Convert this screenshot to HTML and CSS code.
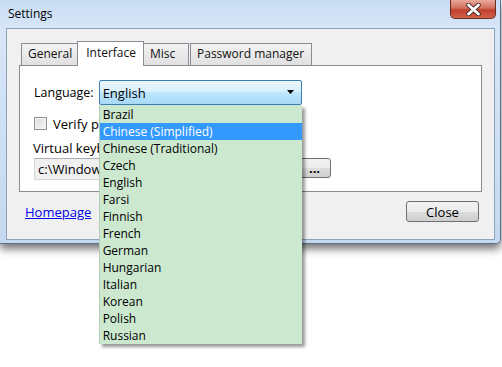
FILE: index.html
```
<!DOCTYPE html>
<html lang="en">
<head>
    <meta charset="UTF-8">
    <title>Settings</title>
    <link rel="stylesheet" href="styles.css">
</head>
<body>
    <div class="window">
        <div class="titlebar">
            <span class="title">Settings</span>
            <div class="close-x">
                <svg width="15" height="13" viewBox="0 0 15 13">
                    <path d="M2.5 2 L12.5 11 M12.5 2 L2.5 11" stroke="#4a2a24" stroke-width="4.6" stroke-linecap="round"/>
                    <path d="M2.5 2 L12.5 11 M12.5 2 L2.5 11" stroke="#fff" stroke-width="2.8" stroke-linecap="round"/>
                </svg>
            </div>
        </div>
        <div class="client">
            <div class="tabs">
                <div class="tab general">General</div>
                <div class="tab active">Interface</div>
                <div class="tab misc">Misc</div>
                <div class="tab">Password manager</div>
            </div>
            <div class="panel">
                <div class="row">
                    <label>Language:</label>
                    <div class="combo-wrap">
                        <div class="combo">
                            <span>English</span>
                            <svg width="8" height="5" viewBox="0 0 8 5"><path d="M0 0 H7 L3.5 4 Z" fill="#000"/></svg>
                        </div>
                        <ul class="dropdown">
                            <li>Brazil</li>
                            <li class="selected">Chinese (Simplified)</li>
                            <li>Chinese (Traditional)</li>
                            <li>Czech</li>
                            <li>English</li>
                            <li>Farsi</li>
                            <li>Finnish</li>
                            <li>French</li>
                            <li>German</li>
                            <li>Hungarian</li>
                            <li>Italian</li>
                            <li>Korean</li>
                            <li>Polish</li>
                            <li>Russian</li>
                        </ul>
                    </div>
                </div>
                <div class="check-row">
                    <span class="checkbox"></span>
                    <span>Verify p</span>
                </div>
                <div class="vk-label">Virtual keyb</div>
                <div class="vk-row">
                    <div class="field">c:\Window</div>
                    <button class="btn small">...</button>
                </div>
            </div>
            <div class="footer">
                <a href="#" class="link">Homepage</a>
                <button class="btn close">Close</button>
            </div>
        </div>
    </div>
</body>
</html>
```

FILE: styles.css
```
html, body {
    min-height: 367px;
}

body {
    margin: 0;
    background-color: #fff;
    font-family: "Open Sans", "Liberation Sans", sans-serif;
    font-size: 12.5px;
    color: #000;
}

.window {
    width: 501px;
    height: 244px;
    box-sizing: border-box;
    background: linear-gradient(#c8dcf3, #d7e6f7 30px, #c4d9ef);
    border-right: 1px solid #5b6f86;
    border-bottom: 1px solid #5b6f86;
    border-bottom-right-radius: 5px;
    box-shadow: 0 5px 9px rgba(0, 0, 0, 0.55);
}

.titlebar {
    height: 28px;
    display: flex;
    justify-content: space-between;
    align-items: flex-start;
}

.title {
    padding-left: 8px;
    line-height: 28px;
    font-size: 12px;
}

.close-x {
    width: 46px;
    height: 19px;
    margin-right: 4px;
    box-sizing: border-box;
    border: 1px solid #6b2c22;
    border-top: none;
    border-radius: 0 0 5px 5px;
    background: linear-gradient(#e9a89a, #d1705e 45%, #c0402c 55%, #d2614c);
    display: flex;
    align-items: center;
    justify-content: center;
}

.client {
    margin: 0 5px 0 6px;
    height: 212px;
    box-sizing: border-box;
    background-color: #f0f0f0;
    border: 1px solid #8ca3bb;
    padding: 11px 12px 0 12px;
}

.tabs {
    display: flex;
    align-items: flex-end;
    height: 25px;
    padding-left: 2px;
    font-size: 12px;
}

.tab {
    height: 22px;
    box-sizing: border-box;
    padding: 0 6px 0 6px;
    line-height: 20px;
    border: 1px solid #898c95;
    border-bottom: none;
    background: linear-gradient(#f3f3f3, #e0e0e0);
    color: #111;
}

.tab.general {
    padding-right: 5px;
}

.tab.active {
    height: 25px;
    margin: 0 -1px -1px -1px;
    padding: 0 7px 0 8px;
    line-height: 22px;
    background: #fff;
    position: relative;
    z-index: 1;
}

.tab.misc {
    width: 46px;
}

.tab:last-child {
    margin-left: 1px;
    padding: 0 7px 0 6px;
}

.panel {
    height: 127px;
    box-sizing: border-box;
    background-color: #fff;
    border: 1px solid #898c95;
    padding: 14px 0 0 14px;
}

.row {
    display: flex;
    align-items: center;
    gap: 5px;
}

.combo-wrap {
    position: relative;
}

.combo {
    width: 203px;
    height: 25px;
    box-sizing: border-box;
    border: 1px solid #3c7fb1;
    border-radius: 2px;
    background: linear-gradient(#eaf6fd, #d9f0fc 45%, #bee6fd 50%, #a7d9f5);
    display: flex;
    align-items: center;
    justify-content: space-between;
    padding: 0 6px 0 3px;
    font-size: 13px;
}

.dropdown {
    position: absolute;
    top: 25px;
    left: 0;
    width: 203px;
    margin: 0;
    padding: 1px 0 0 0;
    list-style: none;
    box-sizing: border-box;
    background-color: #cce8cf;
    border-left: 1px solid #b6cdb8;
    box-shadow: 3px 3px 3px rgba(0, 0, 0, 0.4);
    z-index: 5;
}

.dropdown li {
    height: 17px;
    line-height: 17px;
    padding-left: 3px;
    font-size: 12px;
}

.dropdown li.selected {
    background-color: #3399ff;
    color: #fff;
}

.check-row {
    display: flex;
    align-items: center;
    gap: 6px;
    margin-top: 12px;
    height: 13px;
    font-size: 13px;
}

.checkbox {
    width: 13px;
    height: 13px;
    box-sizing: border-box;
    border: 1px solid #8f8f8f;
    background: linear-gradient(135deg, #dcdcdc, #f6f6f6);
    box-shadow: inset 0 0 0 1px #f4f4f4;
}

.vk-label {
    margin-top: 10px;
    margin-left: -1px;
    line-height: 17px;
    font-size: 13px;
}

.vk-row {
    display: flex;
    align-items: flex-start;
    gap: 2px;
    margin-top: 1px;
}

.field {
    width: 262px;
    height: 22px;
    box-sizing: border-box;
    border: 1px solid #d5d5d5;
    border-top-color: #abadb3;
    background-color: #f0f0f0;
    line-height: 20px;
    padding-left: 3px;
    font-size: 13px;
}

.btn {
    font-family: inherit;
    font-size: 13px;
    box-sizing: border-box;
    border: 1px solid #707070;
    border-radius: 3px;
    background: linear-gradient(#f2f2f2, #ebebeb 50%, #dddddd 50%, #cfcfcf);
    padding: 0;
    color: #000;
}

.btn.small {
    width: 33px;
    height: 20px;
    line-height: 14px;
    font-weight: bold;
}

.footer {
    display: flex;
    justify-content: space-between;
    align-items: center;
    padding: 9px 3px 0 6px;
}

.link {
    color: #0000ee;
    font-size: 13px;
}

.btn.close {
    width: 73px;
    height: 21px;
}
```
